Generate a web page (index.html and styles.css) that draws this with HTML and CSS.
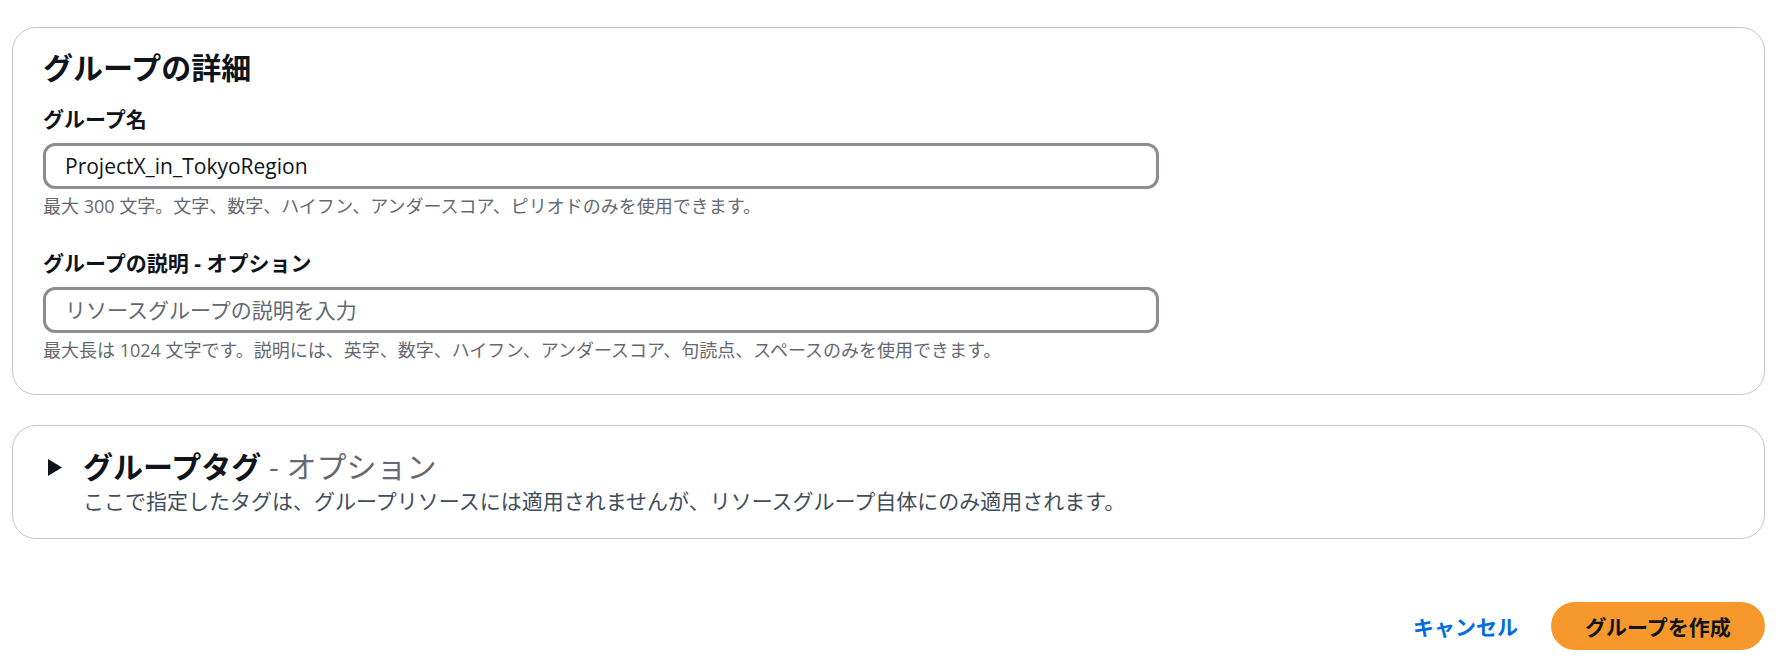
FILE: index.html
```html
<!DOCTYPE html>
<html lang="ja">
<head>
<meta charset="utf-8">
<title>グループの詳細</title>
<link rel="stylesheet" href="styles.css">
</head>
<body>
<main class="page">
  <section class="card details">
    <h2 class="card-title">グループの詳細</h2>
    <div class="field">
      <label class="field-label" for="group-name">グループ名</label>
      <input class="field-input" id="group-name" type="text" value="ProjectX_in_TokyoRegion">
      <p class="field-hint">最大 300 文字。文字、数字、ハイフン、アンダースコア、ピリオドのみを使用できます。</p>
    </div>
    <div class="field field-next">
      <label class="field-label" for="group-desc">グループの説明 - オプション</label>
      <input class="field-input" id="group-desc" type="text" placeholder="リソースグループの説明を入力">
      <p class="field-hint">最大長は 1024 文字です。説明には、英字、数字、ハイフン、アンダースコア、句読点、スペースのみを使用できます。</p>
    </div>
  </section>

  <section class="card tags">
    <div class="expander">
      <span class="caret" aria-hidden="true">
        <svg width="14" height="17" viewBox="0 0 14 17"><polygon points="0,0 14,8.5 0,17" fill="#0f141a"/></svg>
      </span>
      <div class="expander-text">
        <h2 class="expander-title">グループタグ<span class="optional"> - オプション</span></h2>
        <p class="expander-desc">ここで指定したタグは、グループリソースには適用されませんが、リソースグループ自体にのみ適用されます。</p>
      </div>
    </div>
  </section>

  <div class="actions">
    <button class="btn btn-link" type="button">キャンセル</button>
    <button class="btn btn-primary" type="button">グループを作成</button>
  </div>
</main>
</body>
</html>
```

FILE: styles.css
```css
* {
  box-sizing: border-box;
}

html, body {
  margin: 0;
  padding: 0;
  background: #ffffff;
}

body {
  font-family: "Open Sans", "Noto Sans CJK JP", sans-serif;
  color: #0f141a;
}

.page {
  padding: 27px 18px 0 12px;
}

.card {
  border: 1px solid #c6c6cd;
  border-radius: 24px;
  background: #ffffff;
}

.details {
  padding: 22px 30px 32px;
}

.card-title {
  margin: 0 0 20px;
  font-size: 30px;
  line-height: 36px;
  font-weight: 700;
  color: #0f141a;
}

.field {
  display: flex;
  flex-direction: column;
}

.field-next {
  margin-top: 32px;
}

.field-label {
  font-size: 21px;
  line-height: 27px;
  font-weight: 700;
  color: #0f141a;
}

.field-input {
  width: 66%;
  height: 46px;
  margin-top: 10px;
  padding: 0 19px;
  border: 3px solid #8c8c94;
  border-radius: 12px;
  font-family: "Open Sans", "Noto Sans CJK JP", sans-serif;
  font-size: 21px;
  color: #0f141a;
  background: #ffffff;
  outline: none;
}

.field-input::placeholder {
  color: #656871;
  opacity: 1;
}

.field-hint {
  margin: 5px 0 0;
  font-size: 18px;
  line-height: 24px;
  color: #656871;
}

.tags {
  margin-top: 30px;
  padding: 23px 30px 22px 35px;
}

.expander {
  display: flex;
  align-items: flex-start;
  gap: 21px;
}

.caret {
  display: flex;
  align-items: center;
  height: 36px;
  padding-top: 1px;
}

.caret svg {
  display: block;
}

.expander-title {
  margin: 0;
  font-size: 30px;
  line-height: 36px;
  font-weight: 700;
  color: #0f141a;
}

.optional {
  font-weight: 400;
  color: #656871;
}

.expander-desc {
  margin: 1px 0 0;
  font-size: 21px;
  line-height: 30px;
  color: #414d5c;
}

.actions {
  display: flex;
  justify-content: flex-end;
  align-items: center;
  gap: 12px;
  margin-top: 63px;
}

.btn {
  height: 48px;
  border: none;
  font-family: "Open Sans", "Noto Sans CJK JP", sans-serif;
  font-size: 21px;
  font-weight: 700;
  cursor: pointer;
}

.btn-link {
  padding: 0 21px;
  background: transparent;
  color: #006ce0;
}

.btn-primary {
  width: 214px;
  padding: 0 30px;
  border-radius: 30px;
  background: #f6982b;
  color: #0f141a;
}
```
